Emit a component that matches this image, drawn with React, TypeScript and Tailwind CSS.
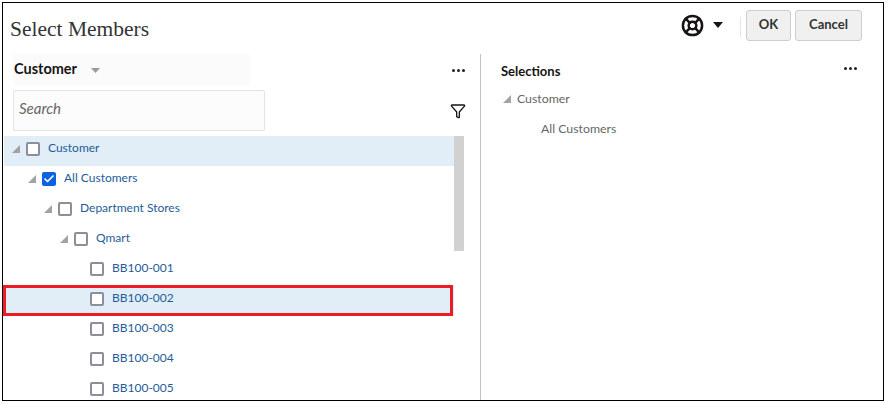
import { Check, Funnel, LifeBuoy } from "lucide-react";

const rows = [
  { label: "Customer", indent: 8, arrow: true, selected: true },
  { label: "All Customers", indent: 24, arrow: true, checked: true },
  { label: "Department Stores", indent: 40, arrow: true },
  { label: "Qmart", indent: 56, arrow: true },
  { label: "BB100-001", indent: 72 },
  { label: "BB100-002", indent: 72, selected: true, marked: true },
  { label: "BB100-003", indent: 72 },
  { label: "BB100-004", indent: 72 },
  { label: "BB100-005", indent: 72 },
];

function Arrow() {
  return (
    <svg width="8" height="8" viewBox="0 0 8 8" className="shrink-0">
      <polygon points="8,0 8,8 0,8" fill="#a3a3a3" />
    </svg>
  );
}

function Dots() {
  return (
    <div className="flex gap-[2px]">
      <span className="w-[3px] h-[3px] rounded-full bg-[#222]" />
      <span className="w-[3px] h-[3px] rounded-full bg-[#222]" />
      <span className="w-[3px] h-[3px] rounded-full bg-[#222]" />
    </div>
  );
}

function TreeRow({ row }: { row: (typeof rows)[number] }) {
  return (
    <div
      className={`relative h-[30px] flex items-center pb-[4px] ${row.selected ? "bg-[#e1eef7]" : ""}`}
      style={{ paddingLeft: row.indent }}
    >
      <div className="w-[8px] mr-[6px] shrink-0 flex">{row.arrow && <Arrow />}</div>
      {row.checked ? (
        <span className="w-[14px] h-[14px] rounded-[2px] bg-[#0d62e0] flex items-center justify-center shrink-0">
          <Check size={12} strokeWidth={3.5} className="text-white" />
        </span>
      ) : (
        <span className="w-[14px] h-[14px] rounded-[2px] border-2 border-[#8f8d9b] bg-white shrink-0" />
      )}
      <span className="ml-[8px] mb-[2px] text-[12px] leading-[16px] text-[#1f5c99]">{row.label}</span>
      {row.marked && (
        <div className="absolute top-[-1px] left-[-1px] right-[1px] bottom-0 border-[3px] border-[#ed1c24]" />
      )}
    </div>
  );
}

export default function App() {
  return (
    <div className="w-[888px] h-[404px] bg-white pl-[2px] pt-[2px] font-['Lato',sans-serif]">
      <div className="w-[882px] h-[399px] border border-black overflow-hidden flex flex-col">
        {/* Header */}
        <div className="h-[51px] shrink-0 flex items-start">
          <h1 className="ml-[7px] mt-[13px] text-[21.5px] leading-[26px] text-[#333] font-['Liberation_Serif',serif]">
            Select Members
          </h1>
          <div className="ml-auto mr-[21px] mt-[7px] flex items-start">
            <LifeBuoy size={23} strokeWidth={2.6} className="text-[#161513] mt-[4px]" />
            <svg width="10" height="6" viewBox="0 0 10 6" className="ml-[9px] mt-[12px]">
              <polygon points="0,0 10,0 5,6" fill="#161513" />
            </svg>
            <div className="w-px h-[20px] bg-[#e5e5e5] ml-[17px] mt-[7px]" />
            <button className="ml-[5px] w-[45px] h-[31px] pb-[2px] rounded-[3px] border border-[#c9d0d4] bg-[#f0f0f0] text-[13px] font-bold text-[#333]">
              OK
            </button>
            <button className="ml-[4px] w-[67px] h-[31px] pb-[2px] rounded-[3px] border border-[#c9d0d4] bg-[#f0f0f0] text-[13px] font-bold text-[#333]">
              Cancel
            </button>
          </div>
        </div>

        <div className="flex-1 flex min-h-0">
          {/* Members panel */}
          <div className="w-[478px] shrink-0 border-r border-[#c4c4bc] flex flex-col min-h-0">
            <div className="h-[32px] shrink-0 flex items-center">
              <div className="ml-[10px] pl-[1px] pb-[3px] w-[237px] h-[32px] bg-[#fbfbfb] flex items-center">
                <span className="text-[14.5px] font-bold text-[#161513]">Customer</span>
                <svg width="9" height="5" viewBox="0 0 9 5" className="ml-[14px] mt-[4px]">
                  <polygon points="0,0 9,0 4.5,5" fill="#9a9a9a" />
                </svg>
              </div>
              <div className="ml-auto mr-[15px]">
                <Dots />
              </div>
            </div>
            <div className="mt-[4px] h-[41px] shrink-0 flex items-center">
              <div className="ml-[10px] w-[252px] h-[41px] border border-[#e3e3e3] rounded-[2px] bg-[#fcfcfc] flex items-center pl-[5px] pb-[5px]">
                <span className="text-[15px] italic text-[#666]">Search</span>
              </div>
              <Funnel size={16} strokeWidth={2} className="ml-auto mr-[14px] text-[#161513]" />
            </div>
            <div className="mt-[5px] flex-1 flex min-h-0 overflow-hidden pl-[1px] pr-[16px]">
              <div className="w-[450px] shrink-0">
                {rows.map((row) => (
                  <TreeRow key={row.label} row={row} />
                ))}
              </div>
              <div className="w-[10px] shrink-0">
                <div className="h-[115px] bg-[#d1d1d1]" />
              </div>
            </div>
          </div>

          {/* Selections panel */}
          <div className="flex-1 min-w-0 pl-[20px] pr-[26px]">
            <div className="h-[30px] flex items-start justify-between">
              <span className="mt-[8px] text-[13px] font-bold text-[#161513]">Selections</span>
              <div className="mt-[13px]">
                <Dots />
              </div>
            </div>
            <div className="mt-[6px] flex items-center h-[18px] pl-[2px]">
              <Arrow />
              <span className="ml-[6px] text-[12.3px] text-[#666]">Customer</span>
            </div>
            <div className="mt-[12px] h-[18px] pl-[40px] flex items-center text-[12.3px] text-[#666]">
              All Customers
            </div>
          </div>
        </div>
      </div>
    </div>
  );
}
